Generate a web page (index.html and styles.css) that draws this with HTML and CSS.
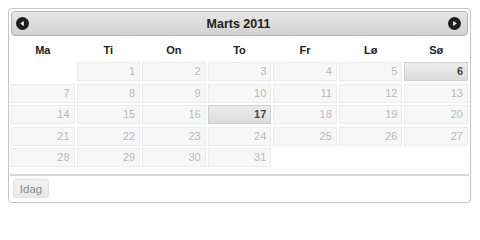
FILE: index.html
```html
<!DOCTYPE html>
<html lang="da">
<head>
<meta charset="utf-8">
<title>Datepicker</title>
<link rel="stylesheet" href="styles.css">
</head>
<body>
<div class="picker">
  <div class="header">
    <span class="nav prev"><svg width="13" height="13" viewBox="0 0 13 13"><circle cx="6.5" cy="6.5" r="6.5" fill="#1e1e1e"/><path d="M4.2 6.5 L7.8 4 L7.8 9 Z" fill="#fff"/></svg></span>
    <span class="title">Marts 2011</span>
    <span class="nav next"><svg width="13" height="13" viewBox="0 0 13 13"><circle cx="6.5" cy="6.5" r="6.5" fill="#1e1e1e"/><path d="M8.8 6.5 L5.2 4 L5.2 9 Z" fill="#fff"/></svg></span>
  </div>
  <div class="daynames">
    <span>Ma</span><span>Ti</span><span>On</span><span>To</span><span>Fr</span><span>Lø</span><span>Sø</span>
  </div>
  <div class="days">
    <span class="empty"></span>
    <span class="d">1</span><span class="d">2</span><span class="d">3</span><span class="d">4</span><span class="d">5</span><span class="d hi">6</span>
    <span class="d">7</span><span class="d">8</span><span class="d">9</span><span class="d">10</span><span class="d">11</span><span class="d">12</span><span class="d">13</span>
    <span class="d">14</span><span class="d">15</span><span class="d">16</span><span class="d hi">17</span><span class="d">18</span><span class="d">19</span><span class="d">20</span>
    <span class="d">21</span><span class="d">22</span><span class="d">23</span><span class="d">24</span><span class="d">25</span><span class="d">26</span><span class="d">27</span>
    <span class="d">28</span><span class="d">29</span><span class="d">30</span><span class="d">31</span>
  </div>
  <div class="pane">
    <button class="today" type="button">Idag</button>
  </div>
</div>
</body>
</html>
```

FILE: styles.css
```css
html, body {
  margin: 0;
  padding: 0;
  background: #fff;
}
body {
  font-family: "Liberation Sans", Arial, sans-serif;
}
.picker {
  box-sizing: border-box;
  margin: 8px 0 0 8px;
  width: 463px;
  height: 195px;
  border: 1px solid #c4c4c4;
  border-radius: 4px;
  padding: 2px;
  background: #fff;
  box-shadow: 0 0 1px rgba(0,0,0,0.05);
}
.header {
  box-sizing: border-box;
  height: 25px;
  border: 1px solid #b3b3b3;
  border-radius: 4px;
  background: linear-gradient(#e6e6e6, #d2d2d2);
  display: flex;
  align-items: center;
  justify-content: space-between;
  padding: 0 6px 0 4px;
}
.nav {
  display: flex;
  width: 13px;
  height: 13px;
}
.title {
  font-weight: bold;
  font-size: 12.5px;
  color: #222;
}
.daynames {
  display: grid;
  grid-template-columns: repeat(7, 1fr);
  column-gap: 2px;
  height: 22px;
  margin-top: 2px;
  align-items: center;
}
.daynames span {
  text-align: center;
  font-weight: bold;
  font-size: 11px;
  color: #222;
  padding-top: 1px;
}
.days {
  display: grid;
  grid-template-columns: repeat(7, 1fr);
  grid-auto-rows: 19px;
  gap: 2.5px 2px;
  margin-top: 2px;
}
.d {
  box-sizing: border-box;
  border: 1px solid #ececec;
  background: #f7f7f7;
  color: #b9b9b9;
  font-size: 11px;
  text-align: right;
  padding-right: 4px;
  line-height: 17px;
}
.d.hi {
  border-color: #cfcfcf;
  background: linear-gradient(#ececec, #dcdcdc);
  color: #444;
  font-weight: bold;
}
.pane {
  margin: 7px -1px 0;
  border-top: 2px solid #d8d8d8;
  padding: 3px 3px 0;
  display: flex;
}
.today {
  box-sizing: border-box;
  height: 19px;
  width: 36px;
  padding: 0;
  border: 1px solid #e0e0e0;
  border-radius: 3px;
  background: linear-gradient(#f2f2f2, #e8e8e8);
  color: #8a8a8a;
  font-family: "Liberation Sans", Arial, sans-serif;
  font-size: 11.5px;
}
```
